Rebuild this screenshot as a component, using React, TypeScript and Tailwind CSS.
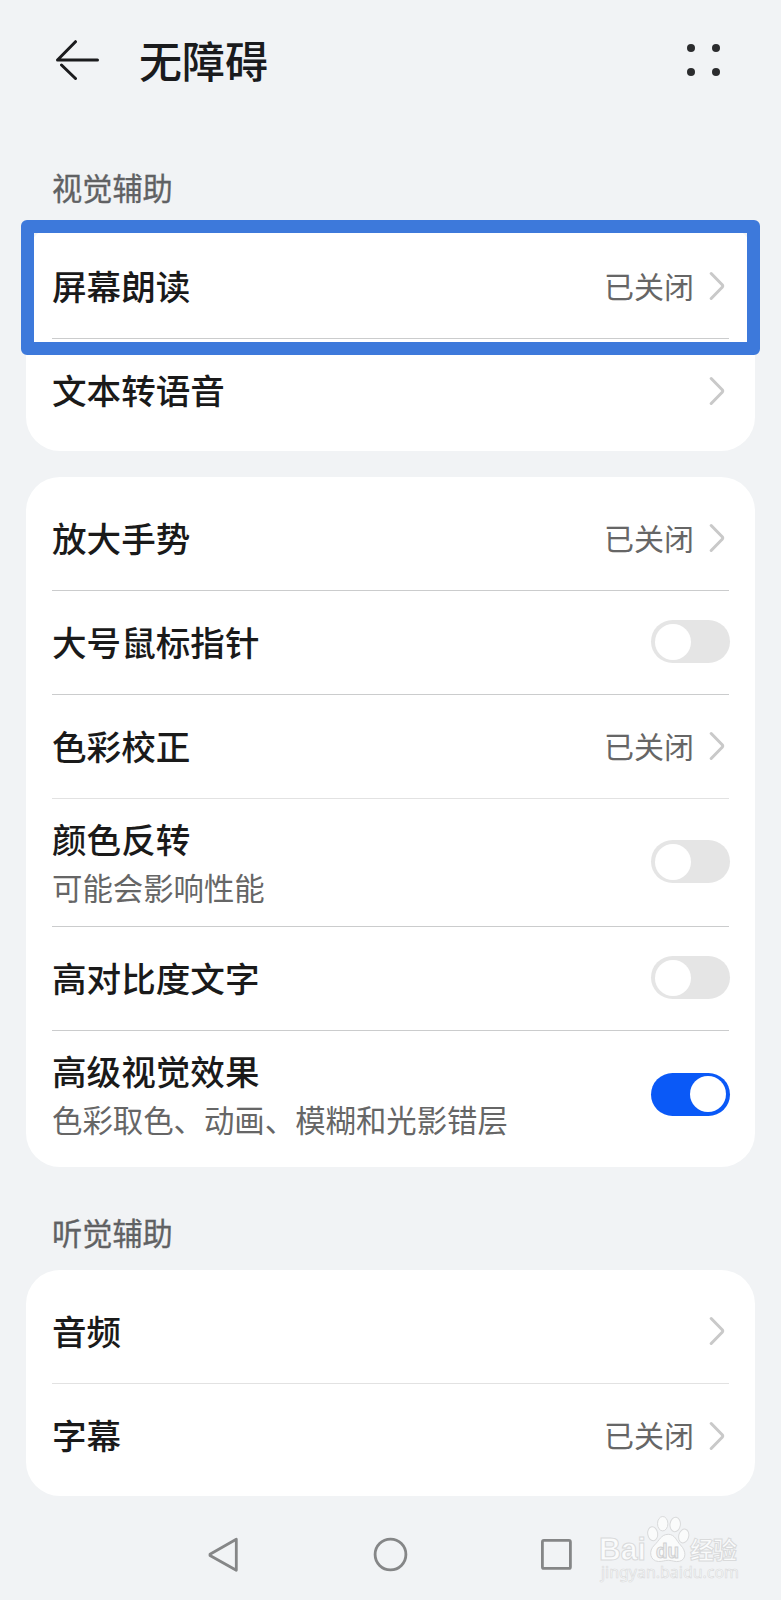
import React from "react";

type RowProps = {
  title: string;
  subtitle?: string;
  value?: string;
  toggle?: "on" | "off";
  last?: boolean;
  faint?: boolean;
};

function Chevron() {
  return (
    <svg className="mb-px block" width="16" height="30" viewBox="0 0 16 30" fill="none">
      <path d="M2.200 2.500L13.200 13.800Q14.200 15 13.200 16.200L2.200 27.500" stroke="#c9c9c9" strokeWidth="3" strokeLinecap="round" strokeLinejoin="round" />
    </svg>
  );
}

function Toggle({ on }: { on: boolean }) {
  return (
    <div
      className={
        on
          ? "-mr-px mb-0.5 flex h-[43px] w-[79px] items-center justify-end rounded-full bg-[#0a59f7] px-1"
          : "-mr-px mb-0.5 flex h-[43px] w-[79px] items-center justify-start rounded-full bg-[#e5e5e5] px-1"
      }
    >
      <div className="size-9 rounded-full bg-white" />
    </div>
  );
}

function Row({ title, subtitle, value, toggle, last, faint }: RowProps) {
  return (
    <div
      className={
        (subtitle ? "h-32 " : "h-[104px] ") +
        "flex items-center justify-between " +
        (last ? "" : faint ? "border-b border-[#e2e2e2]" : "border-b border-[#cbcccd]")
      }
    >
      <div className={subtitle ? "flex flex-col" : "flex flex-col pb-[4px]"}>
        <span className="text-[34.6px] leading-[48px] font-medium text-[#1a1a1a]">{title}</span>
        {subtitle && <span className="pt-px text-[30.4px] leading-[49px] text-[#666]">{subtitle}</span>}
      </div>
      {toggle ? (
        <Toggle on={toggle === "on"} />
      ) : (
        <div className="flex items-center gap-[15px] pr-1">
          {value && <span className="pb-[4px] text-[30px] leading-[48px] text-[#666]">{value}</span>}
          <Chevron />
        </div>
      )}
    </div>
  );
}

function Card({ children }: { children: React.ReactNode }) {
  return <section className="mx-[26px] rounded-[34px] bg-white px-[26px] pt-[10px] pb-2">{children}</section>;
}

function SectionTitle({ children }: { children: React.ReactNode }) {
  return (
    <h2 className="pl-[52px] text-[30.2px] leading-[44px] text-[#606163] [-webkit-text-stroke:0.3px_#606163]">
      {children}
    </h2>
  );
}

function Watermark() {
  return (
    <div className="absolute top-[1513px] left-[598px] h-[80px] w-[146px]">
      <svg className="block" width="146" height="80" viewBox="0 0 146 80" stroke="#d9dadb" strokeWidth="1" fill="#fafbfb">
        <text x="1" y="47" fontSize="31" fontWeight="bold" textLength="47" lengthAdjust="spacingAndGlyphs" fontFamily="Liberation Sans, sans-serif">Bai</text>
        <ellipse cx="54.700" cy="20.700" rx="5" ry="7" transform="rotate(-8 54.7 20.7)" />
        <ellipse cx="64.700" cy="10.700" rx="5.200" ry="7.200" />
        <ellipse cx="77.200" cy="11.500" rx="5.200" ry="7.200" transform="rotate(8 77.2 11.5)" />
        <ellipse cx="85.700" cy="23" rx="5" ry="7" transform="rotate(15 85.7 23)" />
        <path d="M70.300 21.300C63 21.300 61 28 56.500 32C50 38 52 48 60.500 48.500C64.500 48.700 66.500 47.300 70.300 47.300C74.500 47.300 77 49.300 81.500 48.300C88.500 46.500 88.500 38 82.500 32C78.500 28 77 21.300 70.300 21.300Z" />
        <text x="58" y="44.500" fontSize="20" fontWeight="bold" textLength="23" lengthAdjust="spacingAndGlyphs" fill="#eff0f1" stroke="#cfd0d1" fontFamily="Liberation Sans, sans-serif">du</text>
        <text x="92" y="45.500" fontSize="24" fontWeight="bold" textLength="47" fontFamily="Noto Sans CJK SC, sans-serif">经验</text>
        <text x="3" y="65" fontSize="15.500" strokeWidth="0.6" textLength="138" lengthAdjust="spacingAndGlyphs" fontFamily="Noto Sans, sans-serif">jingyan.baidu.com</text>
      </svg>
    </div>
  );
}

export default function App() {
  return (
    <main className="relative flex h-[1600px] w-[781px] flex-col overflow-hidden bg-[#f1f3f5] font-['Noto_Sans_CJK_SC',sans-serif]">
      <header className="flex h-[122px] items-center pl-[55px] pr-[60px]">
        <svg className="block" width="45" height="42" viewBox="0 0 45 42" fill="none" stroke="#1b1b1d" strokeWidth="3" strokeLinecap="round" strokeLinejoin="round">
          <path d="M42.500 20H2.500L20.500 1.700M6.500 25L20.500 38.500" />
        </svg>
        <h1 className="ml-[39px] pb-[4px] text-[43px] leading-[60px] font-medium text-[#1a1b1d]">无障碍</h1>
        <svg className="mb-0.5 ml-auto block" width="35" height="34" viewBox="0 0 35 34" fill="#2b2c2e">
          <circle cx="5" cy="5" r="4" />
          <circle cx="30" cy="5" r="4" />
          <circle cx="5" cy="29" r="4" />
          <circle cx="30" cy="29" r="4" />
        </svg>
      </header>

      <div className="mt-[43px] mb-[16px]">
        <SectionTitle>视觉辅助</SectionTitle>
      </div>
      <Card>
        <Row title="屏幕朗读" value="已关闭" />
        <Row title="文本转语音" last />
      </Card>

      <div className="mt-[26px]">
        <Card>
          <Row title="放大手势" value="已关闭" />
          <Row title="大号鼠标指针" toggle="off" />
          <Row title="色彩校正" value="已关闭" faint />
          <Row title="颜色反转" subtitle="可能会影响性能" toggle="off" />
          <Row title="高对比度文字" toggle="off" />
          <Row title="高级视觉效果" subtitle="色彩取色、动画、模糊和光影错层" toggle="on" last />
        </Card>
      </div>

      <div className="mt-[43px] mb-[16px]">
        <SectionTitle>听觉辅助</SectionTitle>
      </div>
      <Card>
        <Row title="音频" faint />
        <Row title="字幕" value="已关闭" last />
      </Card>

      <nav className="mt-[41px] flex items-center pl-[208px]">
        <svg className="block" width="31" height="36" viewBox="0 0 31 36" fill="none" stroke="#858687" strokeWidth="2.800" strokeLinejoin="round">
          <path d="M28.300 2.300V33.300L2 18.500V17.200Z" />
        </svg>
        <svg className="ml-[134px] block" width="36" height="36" viewBox="0 0 36 36" fill="none" stroke="#858687" strokeWidth="2.800">
          <circle cx="17.500" cy="17.500" r="15.400" />
        </svg>
        <svg className="ml-[131px] block" width="34" height="34" viewBox="0 0 34 34" fill="none" stroke="#858687" strokeWidth="2.800">
          <rect x="2.400" y="2.400" width="28" height="28" rx="1.500" />
        </svg>
      </nav>

      <div className="absolute top-[220px] left-[21px] h-[135px] w-[739px] rounded-md border-[13px] border-[#3d79db]" />
      <Watermark />
    </main>
  );
}
